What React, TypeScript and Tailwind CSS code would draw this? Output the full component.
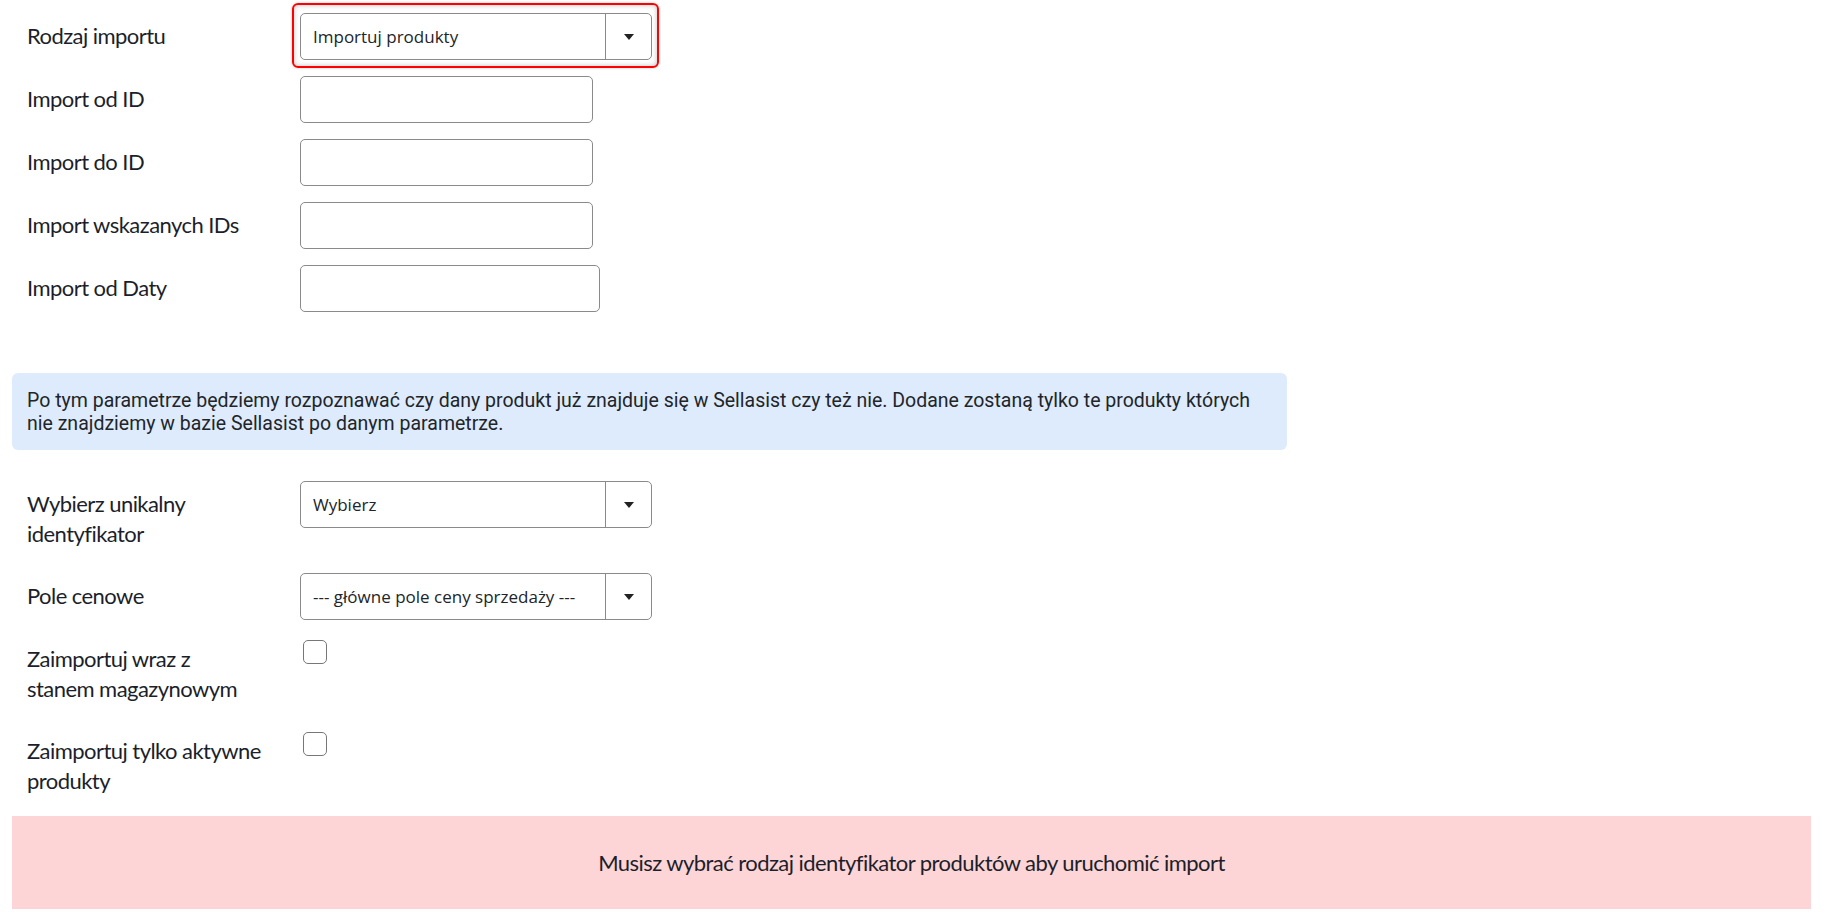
import React from "react";

const labelFont = { fontFamily: 'Lato, "Noto Sans", sans-serif', letterSpacing: "-0.55px" };

function Label({ children }: { children: React.ReactNode }) {
  return (
    <div
      className="w-[288px] shrink-0 pl-[15px] pt-[8px] pb-[8px] text-[22px] font-normal leading-[30px] text-[#1c1f2b] whitespace-nowrap"
      style={labelFont}
    >
      {children}
    </div>
  );
}

function Select({ value }: { value: string }) {
  return (
    <div className="flex h-[47px] w-[352px] items-stretch rounded-[5px] border border-[#8a8a8a] bg-white font-['Open_Sans',sans-serif] text-[17px] text-[#212529]">
      <div className="flex flex-1 items-center pl-[12px]">{value}</div>
      <div className="flex w-[46px] items-center justify-center border-l border-[#8a8a8a]">
        <svg width="10" height="6" viewBox="0 0 10 6">
          <path d="M0 0 L10 0 L5 6 Z" fill="#222" />
        </svg>
      </div>
    </div>
  );
}

function Input({ w }: { w: string }) {
  return <div className={`h-[47px] rounded-[5px] border border-[#8a8a8a] bg-white ${w}`} />;
}

function Checkbox() {
  return <div className="ml-[3px] mt-[4px] h-[24px] w-[24px] rounded-[5px] border border-[#777] bg-white" />;
}

export default function App() {
  return (
    <div className="min-h-[923px] w-full bg-white pl-[12px] pr-[15px] pt-[13px]">
      <div className="flex flex-col gap-[16px]">
        <div className="flex items-start">
          <Label>Rodzaj importu</Label>
          <div className="relative">
            <div className="pointer-events-none absolute left-[-8px] top-[-10px] h-[65px] w-[367px] rounded-[6px] border-2 border-[#ff0000] shadow-[inset_0_0_5px_rgba(0,0,0,0.25),0_0_3px_rgba(0,0,0,0.2)]" />
            <Select value="Importuj produkty" />
          </div>
        </div>
        <div className="flex items-start">
          <Label>Import od ID</Label>
          <Input w="w-[293px]" />
        </div>
        <div className="flex items-start">
          <Label>Import do ID</Label>
          <Input w="w-[293px]" />
        </div>
        <div className="flex items-start">
          <Label>Import wskazanych IDs</Label>
          <Input w="w-[293px]" />
        </div>
        <div className="flex items-start">
          <Label>Import od Daty</Label>
          <Input w="w-[300px]" />
        </div>
      </div>

      <div className="mt-[61px] w-[1275px] rounded-[6px] bg-[#deebfd] pl-[15px] pr-[12px] pt-[16px] pb-[15px] font-['Roboto',sans-serif] text-[19.5px] leading-[23px] text-[#212529]">
        Po tym parametrze będziemy rozpoznawać czy dany produkt już znajduje się w Sellasist czy też nie. Dodane zostaną tylko te produkty których
        <br />
        nie znajdziemy w bazie Sellasist po danym parametrze.
      </div>

      <div className="mt-[31px] flex flex-col gap-[16px]">
        <div className="flex items-start">
          <Label>
            Wybierz unikalny
            <br />
            identyfikator
          </Label>
          <Select value="Wybierz" />
        </div>
        <div className="flex items-start">
          <Label>Pole cenowe</Label>
          <Select value="--- główne pole ceny sprzedaży ---" />
        </div>
        <div className="flex items-start">
          <Label>
            Zaimportuj wraz z
            <br />
            stanem magazynowym
          </Label>
          <Checkbox />
        </div>
        <div className="flex items-start">
          <Label>
            Zaimportuj tylko aktywne
            <br />
            produkty
          </Label>
          <Checkbox />
        </div>
      </div>

      <div
        className="mt-[12px] flex h-[93px] items-center justify-center bg-[#fdd5d6] text-[22px] font-normal text-[#1c1f2b]"
        style={labelFont}
      >
        Musisz wybrać rodzaj identyfikator produktów aby uruchomić import
      </div>
    </div>
  );
}
